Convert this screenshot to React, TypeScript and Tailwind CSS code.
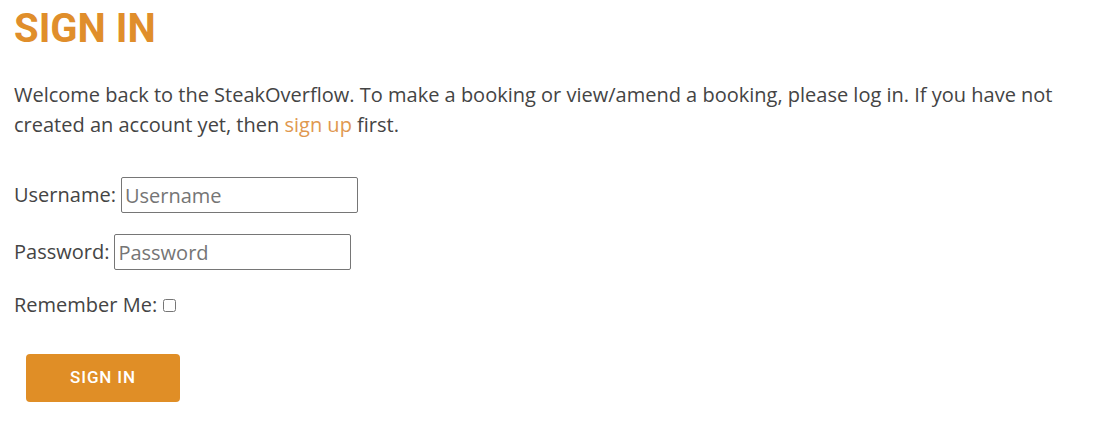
import React from "react";

const App: React.FC = () => {
  return (
    <div className="min-h-screen bg-white px-[14px] pt-[5px] font-['Open_Sans',sans-serif] text-[20px] text-[#444]">
      <h1 className="font-['Roboto',sans-serif] text-[40px] font-bold leading-[1.2] text-[#e08e2b]">
        SIGN IN
      </h1>
      <p className="mt-[27px] leading-[30px]">
        Welcome back to the SteakOverflow. To make a booking or view/amend a
        booking, please log in. If you have not created an account yet, then{" "}
        <a href="#" className="text-[#e0984f]">
          sign up
        </a>{" "}
        first.
      </p>
      <form className="mt-[37px]" onSubmit={(e) => e.preventDefault()}>
        <p className="flex items-center">
          <label htmlFor="id_login">Username:</label>
          <input
            id="id_login"
            type="text"
            placeholder="Username"
            className="ml-[5px] h-[36px] w-[237px] rounded-[2px] border border-[#767676] px-[3px] text-[20px] text-[#444] placeholder:text-[#757575]"
          />
        </p>
        <p className="mt-[21px] flex items-center">
          <label htmlFor="id_password">Password:</label>
          <input
            id="id_password"
            type="password"
            placeholder="Password"
            className="ml-[5px] h-[36px] w-[237px] rounded-[2px] border border-[#767676] px-[3px] text-[20px] text-[#444] placeholder:text-[#757575]"
          />
        </p>
        <p className="mt-[20px] flex items-center">
          <label htmlFor="id_remember">Remember Me:</label>
          <input id="id_remember" type="checkbox" className="ml-[6px] h-[13px] w-[13px]" />
        </p>
        <button
          type="submit"
          className="ml-[12px] mt-[34px] h-[48px] w-[154px] rounded-[4px] bg-[#e08e26] font-['Roboto',sans-serif] text-[17px] font-[500] tracking-[0.05em] text-white"
        >
          SIGN IN
        </button>
      </form>
    </div>
  );
};

export default App;
